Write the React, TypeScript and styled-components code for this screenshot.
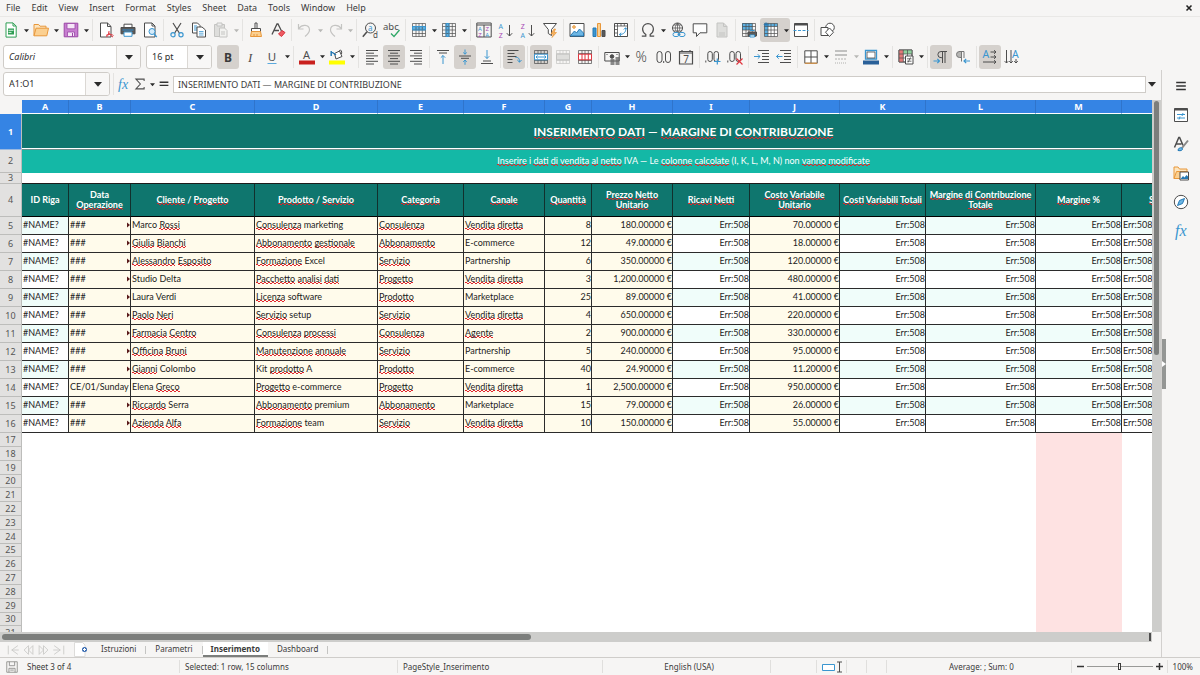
import React, { Fragment } from "react";
import styled, { createGlobalStyle, css } from "styled-components";

const UI = '"Noto Sans", sans-serif';
const CELL = 'Lato, "Liberation Sans", sans-serif';
const INK = "#4d4d4d";
const BLUE = "#3a96d0";
const FADE = "#c4c4c2";

const GlobalStyle = createGlobalStyle`
  *, *::before, *::after { box-sizing: border-box; }
  body { margin: 0; background: #f6f5f4; color: #3a3a3a; font: 9px/12px ${UI}; }
  button, input { font: inherit; color: inherit; }
  button { border: 0; padding: 0; background: none; }
`;

const App = styled.div`
  display: flex;
  flex-direction: column;
  height: 100vh;
  overflow: hidden;
`;

const MenuBar = styled.nav`
  display: flex;
  align-items: center;
  height: 17px;
  padding: 0 6px;
  border-bottom: 1px solid #e9e8e6;
`;

const MenuItem = styled.button`
  margin-right: 11px;
`;

const CloseButton = styled.button`
  display: flex;
  margin-left: auto;
`;

const Toolbar = styled.div<{ $inset?: boolean }>`
  display: flex;
  align-items: center;
  height: ${(p) => (p.$inset ? 27 : 26)}px;
  padding-left: ${(p) => (p.$inset ? 3 : 0)}px;
`;

const ToolButton = styled.button<{ $on?: boolean; $joined?: boolean; $narrow?: boolean }>`
  display: flex;
  align-items: center;
  justify-content: center;
  flex: none;
  width: ${(p) => (p.$narrow ? 16 : 22)}px;
  height: 24px;
  border-radius: ${(p) => (p.$joined ? "3px 0 0 3px" : "3px")};
  background: ${(p) => (p.$on ? "#d5d1cd" : "transparent")};
`;

const ArrowButton = styled.button<{ $on?: boolean; $faded?: boolean }>`
  display: flex;
  align-items: center;
  justify-content: center;
  flex: none;
  width: 8px;
  height: 24px;
  border-radius: 0 3px 3px 0;
  color: ${(p) => (p.$faded ? "#b8b8b6" : "#2b2b2b")};
  background: ${(p) => (p.$on ? "#d5d1cd" : "transparent")};
`;

const Separator = styled.span`
  flex: none;
  width: 1px;
  height: 22px;
  margin: 0 2px;
  background: #e4e3e1;
`;

const Combo = styled.div<{ $width: number; $tight?: boolean }>`
  display: flex;
  flex: none;
  width: ${(p) => p.$width}px;
  height: 24px;
  margin-right: ${(p) => (p.$tight ? 1 : 5)}px;
  border: 1px solid #cfccc8;
  border-radius: 3px;
  overflow: hidden;
  background: #fff;
`;

const ComboInput = styled.input<{ $italic?: boolean }>`
  flex: 1;
  min-width: 0;
  padding: 0 5px;
  border: 0;
  outline: 0;
  background: none;
  color: #2e2e2e;
  font-style: ${(p) => (p.$italic ? "italic" : "normal")};
`;

const ComboArrow = styled.button`
  display: flex;
  align-items: center;
  justify-content: center;
  width: 24px;
  border-left: 1px solid #dbd8d4;
  background: #f8f7f6;
  color: #2b2b2b;
`;

const Main = styled.main`
  display: flex;
  flex: 1;
  min-height: 0;
`;

const Workspace = styled.section`
  display: flex;
  flex-direction: column;
  flex: 1;
  min-width: 0;
`;

const FormulaBar = styled.div`
  display: flex;
  align-items: center;
  height: 30px;
  padding: 0 5px 2px 3px;
`;

const FormulaInput = styled.input`
  flex: 1;
  min-width: 0;
  height: 17px;
  margin: 0 2px 0 1px;
  padding: 0 4px;
  border: 1px solid #cfccc8;
  outline: 0;
  background: #fff;
`;

const SheetArea = styled.div`
  display: flex;
  flex: 1;
  min-height: 0;
`;

const Viewport = styled.div`
  display: flex;
  flex-direction: column;
  flex: 1;
  min-width: 0;
  overflow: hidden;
  background: #fff;
`;

const Sheet = styled.table`
  flex: none;
  width: 1345px;
  table-layout: fixed;
  border-collapse: separate;
  border-spacing: 0;
  font: 9px/12px ${CELL};
  color: #1c1c1c;
`;

const SheetRow = styled.tr<{ $height: number }>`
  height: ${(p) => p.$height}px;
`;

const Corner = styled.td`
  padding: 0;
  background: #f6f5f4;
`;

const ColumnHead = styled.th`
  padding: 0;
  border-right: 1px solid #2f74cb;
  border-bottom: 1px solid #fff;
  background: #3584e4;
  color: #fff;
  font: bold 9px/12px ${UI};
`;

const RowHead = styled.th<{ $on?: boolean }>`
  padding: 0;
  border-right: 1px solid #bdbdbb;
  border-bottom: 1px solid ${(p) => (p.$on ? "#9bb9e0" : "#bdbdbb")};
  background: ${(p) => (p.$on ? "#3584e4" : "#e2e1e0")};
  color: ${(p) => (p.$on ? "#fff" : "#555")};
  font: ${(p) => (p.$on ? "bold" : "normal")} 9px/8px ${UI};
`;

const TitleCell = styled.td`
  padding: 0;
  border-bottom: 1px solid #6d8f8c;
  background: #0f766e;
  box-shadow: inset 0 -1px #fff;
  color: #fff;
  text-align: center;
  font: bold 12px/16px ${CELL};
`;

const NoteCell = styled.td`
  padding: 0 0 2px;
  background: #14b8a6;
  color: #fff;
  text-align: center;
`;

const SpacerCell = styled.td`
  padding: 0;
  border-bottom: 1px solid #1c1c1c;
`;

const FieldHead = styled.th`
  padding: 0;
  border-right: 1px solid #12302d;
  border-bottom: 1px solid #000;
  background: #0f766e;
  color: #fff;
  font: bold 9px/10px ${CELL};
`;

const fills = { input: "#fffbeb", mint: "#f0fdfa", plain: "#fff" };

const Cell = styled.td<{ $fill: keyof typeof fills; $right?: boolean }>`
  padding: 0 0 2px ${(p) => (p.$right ? 0 : 1)}px;
  border-right: 1px solid #2b2b2b;
  border-bottom: 1px solid #2b2b2b;
  background: ${(p) => fills[p.$fill]};
  text-align: ${(p) => (p.$right ? "right" : "left")};
  white-space: nowrap;
  overflow: hidden;
`;

const Clipped = styled.span`
  display: flex;
  align-items: center;
  justify-content: space-between;
`;

const EmptyCell = styled.td<{ $alert?: boolean }>`
  padding: 0;
  background: ${(p) => (p.$alert ? "#fee2e2" : "#fff")};
`;

/* A two-pixel-high zigzag under the word, drawn as two offset dashed rows. */
const Misspelled = styled.span`
  background:
    repeating-linear-gradient(90deg, #e0262c 0 2px, transparent 2px 4px) 0 calc(100% - 1px) / 100% 1px no-repeat,
    repeating-linear-gradient(90deg, transparent 0 2px, #e0262c 2px 4px) 0 100% / 100% 1px no-repeat;
`;

const track = css`
  flex: none;
  background: #cdcdcb;
`;

const VerticalScroll = styled.div`
  ${track}
  width: 9px;
  padding: 1px 2px;
`;

const VerticalThumb = styled.div`
  height: 48%;
  border-radius: 3px;
  background: #7c7e7c;
`;

const HorizontalScroll = styled.div`
  ${track}
  display: flex;
  align-items: center;
  justify-content: space-between;
  height: 10px;
  margin-right: 9px;
  padding: 0 1px 0 2px;
`;

const HorizontalThumb = styled.div`
  width: 46%;
  height: 6px;
  border-radius: 3px;
  background: #7c7e7c;
`;

const SplitGrip = styled.div`
  width: 2px;
  height: 8px;
  background: #4d4d4d;
`;

const TabBar = styled.div`
  display: flex;
  align-items: center;
  height: 15px;
  padding-left: 6px;
  font-size: 8px;
`;

const TabNav = styled.button`
  display: flex;
`;

const AddTab = styled.button`
  display: flex;
  margin: 0 4px 0 8px;
`;

const Tab = styled.button<{ $on?: boolean }>`
  height: 15px;
  padding: 0 ${(p) => (p.$on ? 8 : 9)}px;
  border-bottom: 2px solid ${(p) => (p.$on ? "#7c7e7c" : "transparent")};
  background: ${(p) => (p.$on ? "#fff" : "transparent")};
  font-weight: ${(p) => (p.$on ? "bold" : "normal")};
`;

const TabRule = styled.span`
  width: 1px;
  height: 8px;
  background: #c4c4c2;
`;

const DeckHandle = styled.button`
  display: flex;
  align-items: center;
  justify-content: center;
  align-self: center;
  width: 5px;
  height: 50px;
  background: #949694;
`;

const Sidebar = styled.aside`
  display: flex;
  flex: none;
  width: 39px;
  border-left: 1px solid #d2d0ce;
`;

const Deck = styled.div`
  display: flex;
  flex-direction: column;
  align-items: center;
  flex: 1;
  padding: 1px 5px 0 0;
`;

const DeckButton = styled.button`
  display: flex;
  align-items: center;
  justify-content: center;
  width: 29px;
  height: 29px;
`;

const StatusBar = styled.footer`
  display: flex;
  align-items: center;
  height: 18px;
  padding: 0 7px 0 5px;
  border-top: 1px solid #cfcdca;
  font-size: 8px;
`;

const Status = styled.div<{ $grow?: number; $width?: number; $center?: boolean }>`
  display: flex;
  align-items: center;
  justify-content: ${(p) => (p.$center ? "center" : "flex-start")};
  flex: ${(p) => (p.$grow ? `${p.$grow} 1 0` : "none")};
  width: ${(p) => (p.$width ? `${p.$width}px` : "auto")};
  height: 13px;
  padding-left: 5px;
  border-left: 1px solid #e0dfdd;
  white-space: nowrap;
`;

const DocState = styled.div`
  display: flex;
  align-items: center;
  flex: none;
  gap: 8px;
  width: 174px;
`;

const ZoomGroup = styled.div`
  display: flex;
  align-items: center;
  flex: none;
  gap: 3px;
  width: 96px;
  height: 13px;
  padding-left: 5px;
  border-left: 1px solid #e0dfdd;
`;

const ZoomSlider = styled.input`
  appearance: none;
  width: 66px;
  height: 9px;
  margin: 0;
  background: linear-gradient(#9a9a98, #9a9a98) center / 100% 1px no-repeat;
  &::-webkit-slider-thumb {
    appearance: none;
    width: 3px;
    height: 7px;
    border: 1px solid #3a3a3a;
    background: #f6f5f4;
  }
`;

const Glyph = styled.svg`
  flex: none;
  overflow: visible;
`;

const Caret = ({ size = 6 }: { size?: number }) => (
  <svg width={size} height={size} viewBox="0 0 6 6" aria-hidden="true">
    <path d="M0 1.5h6L3 5z" fill="currentColor" />
  </svg>
);

const letter = (x: number, y: number, size: number, fill: string, s: string, extra: object = {}) => (
  <text x={x} y={y} fontSize={size} fill={fill} stroke="none" fontFamily="Noto Sans" {...extra}>{s}</text>
);

const sheetGrid = (
  <path d="M1.5 1.5h13v13h-13zM1.5 4.5h13M1.5 8h13M1.5 11.5h13M5 1.5v13M8 1.5v13M11.3 1.5v13" strokeWidth=".7" />
);

const pilcrow = (x: number) => (
  <path d={`M${x} 2.5h6M${x} 2.5a3 3 0 0 0 0 6.2h1M${x + 1.5} 2.5v11.5M${x + 4} 2.5v11.5`} strokeWidth="1" />
);

const icons: Record<string, React.ReactNode> = {
  new: <><path d="M3 .9h7l3.2 3.2v11H3z" fill="#fff" stroke="#2f9e54" /><path d="M10 1v3h3" stroke="#2f9e54" /><path d="M5 6.5h6v6H5z" fill="#2f9e54" stroke="none" /><path d="M5.5 8.3h5M5.5 10.4h3" stroke="#d8f2df" /></>,
  open: <><path d="M1 13.8V2.5h4.6l1.4 1.7h6v2" fill="#fce5bf" stroke="#e8973a" /><path d="M1 13.8 3 6.2h12.5L13.8 13.8z" fill="#fbd091" stroke="#e8973a" /></>,
  save: <><path d="M1.2 1.2h13.6v13.6H1.2z" fill="#c77ed0" stroke="#9b47a6" /><path d="M4 1.5h8v5.3H4zM4.5 10h7v4.5h-7z" fill="#f6e7f8" stroke="#9b47a6" strokeWidth=".8" /><path d="M9.5 11v3.5" stroke="#9b47a6" /></>,
  pdf: <><path d="M2.5 1h7L13 4.4V15H2.5z" fill="#fff" /><path d="M9.5 1v3.5H13" /><path d="M8.500 15c2-2 2.500-3.500 2.500-6M8 13.500c3-2 5-1.500 7.500 0M10.500 10.500c1 2 2.500 3.500 4.500 4.500" stroke="#e0353f" /></>,
  print: <><path d="M4 5.500V2.200h8v3.300" fill="#fff" /><path d="M1 5.500h14v6.300H1z" fill="#5a5a5a" /><path d="M2.500 8h11" stroke="#2b8ad0" /><path d="M4 10h8v4.300H4z" fill="#fff" stroke="#3a96d0" /></>,
  preview: <><path d="M2.500 1h7.500L13 4v11H2.500z" fill="#fff" /><path d="M10 1v3h3" /><circle cx="10" cy="9.500" r="3" fill="#d5ebfa" stroke={BLUE} /><path d="m12 12 2.800 3" stroke={BLUE} strokeWidth="1.300" /></>,
  cut: <><path d="M4 1l6.300 10M12 1 5.700 11" strokeWidth="1.200" /><circle cx="4" cy="12.700" r="2.100" stroke={BLUE} strokeWidth="1.200" /><circle cx="12" cy="12.700" r="2.100" stroke={BLUE} strokeWidth="1.200" /></>,
  copy: <><path d="M1.500 1h5l2.500 2.500V11H1.500z" fill="#fff" /><path d="M3 4h3M3 6h3M3 8h3" stroke={BLUE} /><path d="M6 5h5l3.500 3v7H6z" fill="#fff" /><path d="M8 9.500h4.500M8 11.200h4.500M8 13h4.500" stroke={BLUE} strokeWidth=".8" /></>,
  paste: <g stroke={FADE}><path d="M1.500 2.500h10v12h-10z" fill="#dededc" /><path d="M4 1h5v3H4z" fill="#eee" /><path d="M6.500 6h5L14 8.500V15H6.500z" fill="#f2f2f0" /><path d="M8 10h4M8 12h4" /></g>,
  brush: <><path d="M7 1h2v5.500H7z" fill="#fff" /><path d="M3.500 6.500h9v3h-9z" fill="#fff" /><path d="M3.500 9.500h9l1 5H2.500z" fill="#fbd091" stroke="#e8973a" /><path d="M6 12v2.500M9 12v2.500" stroke="#e8973a" /></>,
  clear: <><path d="M2 12.500 7 2h1l3.500 7M4 8.500h5" strokeWidth="1.300" /><path d="m8.500 12 3.500-3.500 3 2-3.500 4z" fill="#ee5b62" stroke="#d8333d" /></>,
  undo: <path d="M1.500 2v5h5M1.800 6.500C5 2 12 2.500 12.500 7.500c.3 3-2 5-4.500 7" stroke={FADE} strokeWidth="1.200" />,
  redo: <path d="M14.500 2v5h-5M14.200 6.500C11 2 4 2.500 3.500 7.500c-.3 3 2 5 4.500 7" stroke={FADE} strokeWidth="1.200" />,
  find: <><circle cx="8.500" cy="6" r="5" /><path d="M5 9.800 .8 14.800" strokeWidth="1.500" />{letter(6, 8.500, 8, BLUE, "a")}{letter(11, 15.500, 8, INK, "d")}</>,
  spell: <>{letter(-1, 7.500, 9.500, INK, "abc")}<path d="m7 11.500 3 3L15.500 8" stroke="#2fa866" strokeWidth="1.300" /></>,
  row: <><path d="M1.500 4.500h13V8h-13z" fill="#5cb0e2" stroke="none" />{sheetGrid}<path d="M1.500 4.500h13V8h-13z" stroke={BLUE} /></>,
  col: <><path d="M5 1.500h3v13H5z" fill="#5cb0e2" stroke="none" />{sheetGrid}<path d="M5 1.500h3v13H5z" stroke={BLUE} /></>,
  sort: <><path d="M.8 1h14.400v14H.8zM.8 3h14.400M8 3v12" />{letter(2, 8.500, 6, BLUE, "A")}{letter(2.200, 14.500, 6, "#a648b5", "Z")}{letter(9.500, 8.500, 6, "#a648b5", "Z")}{letter(9.300, 14.500, 6, BLUE, "A")}</>,
  az: <>{letter(.5, 6.500, 7, BLUE, "A")}{letter(.7, 15.500, 7, "#a648b5", "Z")}<path d="M11.500 3v11M8.800 11.200l2.700 2.800 2.700-2.800" /></>,
  za: <>{letter(.7, 6.500, 7, "#a648b5", "Z")}{letter(.5, 15.500, 7, BLUE, "A")}<path d="M11.500 3v11M8.800 11.200l2.700 2.800 2.700-2.800" /></>,
  filter: <><path d="M1.500 1.500h13L9.500 7.500v6L6.300 11.500v-4z" fill="#fff" /><path d="m12 7-3 5h2.500L10 15.500l4.500-5H12L13.500 7z" fill="#f6b565" stroke="#e8973a" strokeWidth=".7" /></>,
  image: <><path d="M1 1.500h14v13H1z" fill="#fff" /><circle cx="5" cy="5" r="1.300" fill="#fbd091" stroke="#e8973a" /><path d="m1.500 13.500 4-4.500 2 2L10.500 7l4 4v3h-13z" fill="#6db6e4" stroke="#2579b5" /></>,
  chart: <><path d="M2 6h3v8.500H2z" fill="#3a96d0" stroke="#2579b5" /><path d="M6.500 1.500h3v13h-3z" fill="#fbd091" stroke="#e8973a" /><path d="M11 8.500h3v6h-3z" fill="#5a5a5a" /></>,
  pivot: <><path d="M1.500 1.500h13v13h-13z" fill="#fff" /><path d="M1.500 4h13M4.500 1.500v13M8 1.500V4M11.300 1.500V4M1.500 7.500h3M1.500 11h3" strokeWidth=".8" /><path d="M12.500 6c1 4-2 6.500-6 6.500M10.800 7.500l1.800-1.800L14 7.500M8.200 10.800 6.300 12.500 8 14" stroke={BLUE} /></>,
  omega: <path d="M1.800 14.200h4v-1.800C3.500 11 2.600 9 2.600 7a5.400 5.400 0 0 1 10.800 0c0 2-.9 4-3.200 5.400v1.800h4" strokeWidth="1.200" />,
  link: <><circle cx="7.500" cy="6" r="5" /><path d="M2.500 6h10M3.500 3h8M3.500 9h8M7.500 1v10M7.500 1c-3 3-3 7 0 10M7.500 1c3 3 3 7 0 10" strokeWidth=".7" /><rect x="3" y="10.500" width="6" height="4" rx="2" fill="#f6f5f4" stroke={BLUE} /><rect x="9" y="10.500" width="6" height="4" rx="2" fill="#f6f5f4" stroke={BLUE} /><path d="M7.500 12.500h3" stroke={BLUE} /></>,
  comment: <path d="M1.200 1.800h13.600v9H8L4.500 14.500v-3.700H1.200z" fill="#fdfdfd" />,
  doc: <g stroke={FADE}><path d="M3 1h6.500L13 4.500V15H3z" fill="#dededc" /><path d="M9.500 1v3.500H13M5 11h6M5 13h6" /></g>,
  printarea: <><path d="M1 1h10.500v7H1z" fill="#5cb0e2" stroke="none" />{sheetGrid}<path d="M7 10h8.500v4H7z" fill="#5a5a5a" /><path d="M9 8.500h4.500M9 13h4.500v2H9z" fill="#fff" stroke={BLUE} /></>,
  freeze: <><path d="M1.500 1.500h13v13h-13z" fill="#fff" stroke="none" /><path d="M1.500 1.500h13v3h-13zM1.500 4.500H5v10H1.500z" fill="#5cb0e2" stroke="none" />{sheetGrid}<path d="M3 .2v4.600M.7 2.500h4.600M1.300.8l3.400 3.400M4.700.8 1.300 4.200" stroke="#2579b5" strokeWidth=".8" /></>,
  split: <><path d="M1.500 1.500h13v13h-13z" fill="#fff" /><path d="M1.500 2.500h13" strokeWidth="2" /><path d="M.5 8.500h15" stroke={BLUE} strokeDasharray="3 1.500" /></>,
  shapes: <><circle cx="10" cy="5.500" r="4.300" fill="#fff" /><path d="M1 5.500h7v8H1z" fill="#fff" /><path d="m9.500 6 4 4.200-4 4.300-4-4.300z" fill="#fff" /></>,
  bold: letter(4, 12.500, 12, "#3a3a3a", "B", { fontWeight: 700 }),
  italic: letter(6, 12.500, 13, INK, "I", { fontStyle: "italic", fontFamily: "Liberation Serif" }),
  underline: <>{letter(3.800, 11.500, 11.500, INK, "U")}<path d="M3.500 14.500h9" stroke="#5aa9dd" /></>,
  fontcolor: <>{letter(4, 9.800, 11, INK, "A")}<path d="M0 11.500h16v4H0z" fill="#c9211e" stroke="none" /></>,
  highlight: <><path d="m5.500 4.500 5-2.500 2.500 5.500L7 10z" fill="#fff" /><path d="M2 2.500 7 6M2.200 2v5" stroke="#2579b5" strokeWidth="1.500" /><path d="M10.500 2c0-2 3-1 2 3" /><path d="M0 11.500h16v4H0z" fill="#ffff00" stroke="none" /></>,
  left: <path d="M2 1.500h12M2 4.200h8M2 6.900h12M2 9.600h8M2 12.300h12M2 15h8" />,
  center: <path d="M2 1.500h12M4 4.200h8M2 6.900h12M4 9.600h8M2 12.300h12M4 15h8" />,
  right: <path d="M2 1.500h12M6 4.200h8M2 6.900h12M6 9.600h8M2 12.300h12M6 15h8" />,
  top: <><path d="M2 1.500h12M4 4h8" /><path d="M8 15V6.500M5.800 8.700 8 6.500l2.200 2.200" stroke={BLUE} /></>,
  middle: <><path d="M2 7h12M4 9.300h8" /><path d="M8 .5v4.700M6.200 3.500 8 5.200l1.800-1.700M8 15.800v-4.700M6.200 12.800 8 11.100l1.800 1.700" stroke={BLUE} /></>,
  bottom: <><path d="M4 12h8M2 14.500h12" /><path d="M8 1v8.500M5.800 7.300 8 9.500l2.200-2.200" stroke={BLUE} /></>,
  wrap: <><path d="M1.500 1.500h11M1.500 4.500h7M1.500 7.500h9M1.500 10.500h5M1.500 13.500h5" /><path d="M9.500 8.500c3-.5 4 1 4 4.500M11.300 11l2.200 2.200 2-2.200" stroke={BLUE} /></>,
  merge: <>{sheetGrid}<path d="M1.500 5.200h13v5.600h-13z" fill="#fff" stroke={BLUE} /><path d="M3 8h10M4.500 6.500 3 8l1.500 1.500M11.500 6.500 13 8l-1.500 1.500" stroke={BLUE} /></>,
  mergecells: <g stroke={FADE}>{sheetGrid}<path d="M1.500 5.200h13v5.600h-13z" fill="#dededc" /></g>,
  unmerge: <>{sheetGrid}<path d="M1.500 5.200h13v5.600h-13zM5 5.200v5.600M8 5.200v5.600M11.300 5.200v5.600" fill="#fff" stroke="#e0353f" /></>,
  currency: <><path d="M.8 3.500h14.400v8.500H.8z" /><circle cx="8" cy="7.500" r="1.800" fill={INK} /><path d="M2.500 5.500h1M12.500 5.500h1" /><path d="M6.500 11h4M6.500 13h4M6.500 15h4M11.500 9h4M11.500 11h4M11.500 13h4M11.500 15h4" stroke="#666" strokeWidth="1.300" /></>,
  percent: letter(1.500, 13, 14, INK, "%", { fontWeight: 300 }),
  decimal: <><rect x="1" y="2.500" width="5" height="11" rx="2.500" /><rect x="9.500" y="2.500" width="5" height="11" rx="2.500" /><path d="M7.700 12v2" /></>,
  date: <><path d="M1.500 2.500h13v12.500h-13zM1.500 4h13M4 1v2M12 1v2" strokeWidth="1.200" />{letter(5.200, 13.500, 10, INK, "7")}</>,
  adddec: <><path d="M.8 11.500v2" /><rect x="2.800" y="2.500" width="4.500" height="10" rx="2.200" /><rect x="9" y="2.500" width="4.500" height="10" rx="2.200" /><path d="M9 12.500h6.500M12.300 9.500v6" stroke={BLUE} strokeWidth="1.200" /></>,
  deldec: <><path d="M.8 11.500v2" /><rect x="2.800" y="2.500" width="4.500" height="10" rx="2.200" /><rect x="9" y="2.500" width="4.500" height="10" rx="2.200" /><path d="m9.500 9.500 6 6M15.500 9.500l-6 6" stroke="#e0353f" strokeWidth="1.200" /></>,
  indent: <><path d="M4 1.500h11M8 4.500h7M8 7.500h7M8 10.500h7M4 13.500h11" /><path d="M0 7.500h6M3.800 5.300 6 7.500 3.800 9.700" stroke={BLUE} /></>,
  outdent: <><path d="M4 1.500h11M8 4.500h7M8 7.500h7M8 10.500h7M4 13.500h11" /><path d="M.5 7.500h6M2.700 5.300.5 7.500l2.200 2.200" stroke={BLUE} /></>,
  borders: <><path d="M1.800 1.800h12.400v12.400H1.800z" fill="#fff" /><path d="M8 1.800v12.400M1.800 8h12.400" /><path d="M1.800 14.200h12.400" stroke="#e8973a" /></>,
  linestyle: <g stroke="#b0b0ae"><path d="M2 2h12M2 6h12" strokeWidth="1.600" /><path d="M2 10h12" strokeDasharray="2 1" /><path d="M2 14h12" strokeDasharray="1 1" /></g>,
  linecolor: <><path d="M2.500 1.500h11v8.500h-11z" fill="#fff" strokeWidth="1.300" stroke={BLUE} /><path d="M4 3h8v6H4z" strokeWidth=".8" /><path d="M0 11.500h16v4H0z" fill="#2a6099" stroke="none" /></>,
  conditional: <><path d="M1 1h13v12H1z" fill="#fff" /><path d="M1 1h4.300v12H1z" fill="#e37a7a" stroke="none" /><path d="M5.300 1H14v4H5.300z" fill="#8fd19e" stroke="none" /><path d="M1 1h13v12H1zM1 5h13M1 9h13M5.300 1v12M9.500 1v12" strokeWidth=".7" /><path d="M7.500 7h7.500v8H7.500z" fill="#fff" /><path d="M9 9.800h4.500M9 12.200h4.500M12.500 8.500l-2.500 5" strokeWidth=".8" /></>,
  ltr: <>{pilcrow(8)}<path d="M.5 12h6M4.300 9.800 6.500 12l-2.200 2.200" stroke={BLUE} strokeWidth="1.200" /></>,
  rtl: <><path d="M4.500 2.500h2v6h-2a3 3 0 0 1 0-6z" fill="#b5b5b3" stroke="#777" /><path d="M4 2.500h5M6.500 2.500v10M9 2.500V9" stroke="#777" /><path d="M9 12h6M11.200 9.800 9 12l2.200 2.200" stroke={BLUE} strokeWidth="1.200" /></>,
  texth: <>{letter(.5, 9, 10.500, BLUE, "A")}<path d="M8.500 3h5.500M8.500 8h5.500M1 13h13M12 1.200 14 3l-2 1.800M12 6.200 14 8l-2 1.800M12 11.200 14 13l-2 1.800" /></>,
  textv: <><path d="M2.500 1v13M7 1v13M12 10v4M.7 12.200 2.500 14l1.800-1.800M5.200 12.200 7 14l1.800-1.800M10.200 12.200 12 14l1.800-1.800" />{letter(8, 9, 10.500, BLUE, "A")}</>,
  fx: letter(2, 12.500, 14, BLUE, "fx", { fontStyle: "italic", fontFamily: "Liberation Serif" }),
  sigma: <path d="M13.500 4V1.500H2.500L8.500 8l-6 6.500h11V12" strokeWidth="1.400" />,
  equals: <path d="M3 6h10M3 9.500h10" strokeWidth="1.500" stroke="#333" />,
  close: <path d="m4 4 8 8M12 4l-8 8" stroke="#222" strokeWidth="2.500" />,
  hamburger: <path d="M2.500 4h11M2.500 8h11M2.500 12h11" stroke="#333" strokeWidth="1.500" />,
  properties: <><path d="M1.500 1.500h13v13h-13z" fill="#fff" /><path d="M1.500 2.500h13" strokeWidth="2" /><path d="M4 7.500h8M4 11h8M10 6l-1 3M7 9.500l-1 3" stroke={BLUE} /></>,
  styles: <><path d="M1.500 11.500 5.800 1.500h.8l3.500 8M3 8h5.500" strokeWidth="1.500" /><path d="M15 4.500 9 12" strokeWidth="2" stroke="#888" /><path d="M5 14.500c0-2 2-3.500 4-2.500 1.500 1 0 3.500-4 2.500z" fill="#6db6e4" stroke="#2579b5" /></>,
  gallery: <><path d="M1 13.500V2h4l1.500 2H14v3" fill="#fce5bf" stroke="#e8973a" /><path d="M1 13.500 3.500 6.500h11v7z" fill="#fbd091" stroke="#e8973a" /><path d="M7 7h8.500v8H7z" fill="#fff" /><path d="m7.500 14 2.500-3 1.500 1.500L13.500 10l1.500 1.500V14z" fill="#2579b5" stroke="none" /></>,
  navigator: <><circle cx="8" cy="8" r="6.700" fill="#fff" /><path d="m11.500 4.500-2 5-5 2 2-5z" fill="#6db6e4" stroke="#2579b5" /></>,
  functions: letter(2, 12.500, 16, BLUE, "fx", { fontStyle: "italic", fontFamily: "Liberation Serif" }),
  docstate: <path d="M2 2h12v12H2zM5 2v4.500h6V2M4.500 14V9.500h7V14M6 11.500h4" stroke="#8e8e8c" />,
};

const Icon = ({ name, size = 16 }: { name: string; size?: number }) => (
  <Glyph width={size} height={size} viewBox="0 0 16 16" fill="none" stroke={INK} strokeWidth="1" aria-hidden="true">
    {icons[name]}
  </Glyph>
);

type Tool = { name: string; label: string; menu?: boolean; on?: boolean; faded?: boolean };
const t = (name: string, label: string, flags = ""): Tool => ({
  name,
  label,
  menu: flags.includes("m"),
  on: flags.includes("o"),
  faded: flags.includes("f"),
});

const standardTools: Tool[][] = [
  [t("new", "New", "m"), t("open", "Open", "m"), t("save", "Save", "m")],
  [t("pdf", "Export as PDF"), t("print", "Print"), t("preview", "Print preview")],
  [t("cut", "Cut"), t("copy", "Copy"), t("paste", "Paste", "mf")],
  [t("brush", "Clone formatting"), t("clear", "Clear formatting")],
  [t("undo", "Undo", "mf"), t("redo", "Redo", "mf")],
  [t("find", "Find and replace"), t("spell", "Spelling")],
  [t("row", "Row", "m"), t("col", "Column", "m")],
  [t("sort", "Sort"), t("az", "Sort ascending"), t("za", "Sort descending"), t("filter", "AutoFilter")],
  [t("image", "Image"), t("chart", "Chart"), t("pivot", "Pivot table")],
  [t("omega", "Special character", "m"), t("link", "Hyperlink"), t("comment", "Comment"), t("doc", "Headers and footers")],
  [t("printarea", "Print area"), t("freeze", "Freeze rows and columns", "mo"), t("split", "Split window")],
  [t("shapes", "Draw functions")],
];

const formatTools: Tool[][] = [
  [t("bold", "Bold", "o"), t("italic", "Italic"), t("underline", "Underline", "m")],
  [t("fontcolor", "Font color", "m"), t("highlight", "Background color", "m")],
  [t("left", "Align left"), t("center", "Center", "o"), t("right", "Align right")],
  [t("top", "Align top"), t("middle", "Center vertically", "o"), t("bottom", "Align bottom")],
  [t("wrap", "Wrap text", "o")],
  [t("merge", "Merge and center", "o"), t("mergecells", "Merge cells"), t("unmerge", "Unmerge cells")],
  [t("currency", "Currency", "m"), t("percent", "Percent"), t("decimal", "Number"), t("date", "Date")],
  [t("adddec", "Add decimal place"), t("deldec", "Delete decimal place")],
  [t("indent", "Increase indent"), t("outdent", "Decrease indent")],
  [t("borders", "Borders", "m"), t("linestyle", "Border style", "mf"), t("linecolor", "Border color", "m")],
  [t("conditional", "Conditional formatting", "m")],
  [t("ltr", "Left to right", "o"), t("rtl", "Right to left")],
  [t("texth", "Horizontal text", "o"), t("textv", "Vertical text")],
];

const ToolGroups = ({ groups }: { groups: Tool[][] }) => (
  <>
    {groups.map((group, i) => (
      <Fragment key={i}>
        {i > 0 && <Separator />}
        {group.map((tool) => (
          <Fragment key={tool.name}>
            <ToolButton $on={tool.on} $joined={tool.menu} aria-label={tool.label}>
              <Icon name={tool.name} />
            </ToolButton>
            {tool.menu && (
              <ArrowButton $on={tool.on} $faded={tool.faded} aria-label={`${tool.label} options`}>
                <Caret size={5} />
              </ArrowButton>
            )}
          </Fragment>
        ))}
      </Fragment>
    ))}
  </>
);

type ComboProps = { label: string; value: string; width: number; italic?: boolean; tight?: boolean };

const ComboBox = ({ label, value, width, italic, tight }: ComboProps) => (
  <Combo $width={width} $tight={tight}>
    <ComboInput aria-label={label} defaultValue={value} $italic={italic} />
    <ComboArrow aria-label={`${label} list`}><Caret size={8} /></ComboArrow>
  </Combo>
);

/* Words that start with a tilde are flagged by the spell checker. */
const Spelled = ({ text }: { text: string }) => (
  <>
    {text.split(" ").map((word, i) => (
      <Fragment key={i}>
        {i > 0 && " "}
        {word.startsWith("~") ? <Misspelled>{word.slice(1)}</Misspelled> : word}
      </Fragment>
    ))}
  </>
);

const columns: [string, number][] = [
  ["A", 47], ["B", 62], ["C", 124], ["D", 123], ["E", 86], ["F", 81], ["G", 47], ["H", 81],
  ["I", 77], ["J", 90], ["K", 86], ["L", 110], ["M", 86], ["N", 76], ["O", 147],
];

const fields = [
  "ID Riga", "Data ~Operazione", "~Cliente / ~Progetto", "~Prodotto / ~Servizio", "~Categoria", "~Canale",
  "~Quantità", "~Prezzo ~Netto ~Unitario", "~Ricavi ~Netti", "~Costo ~Variabile ~Unitario",
  "~Costi ~Variabili ~Totali", "~Margine ~di ~Contribuzione ~Totale", "~Margine %", "~Stato", "Note",
];

const records: string[][] = [
  ["###", "Marco ~Rossi", "~Consulenza marketing", "~Consulenza", "~Vendita ~diretta", "8", "180.00000 €", "70.00000 €"],
  ["###", "~Giulia ~Bianchi", "~Abbonamento ~gestionale", "~Abbonamento", "E-commerce", "12", "49.00000 €", "18.00000 €"],
  ["###", "~Alessandro ~Esposito", "~Formazione Excel", "~Servizio", "Partnership", "6", "350.00000 €", "120.00000 €"],
  ["###", "Studio Delta", "~Pacchetto ~analisi ~dati", "~Progetto", "~Vendita ~diretta", "3", "1,200.00000 €", "480.00000 €"],
  ["###", "Laura Verdi", "~Licenza software", "~Prodotto", "Marketplace", "25", "89.00000 €", "41.00000 €"],
  ["###", "~Paolo ~Neri", "~Servizio setup", "~Servizio", "~Vendita ~diretta", "4", "650.00000 €", "220.00000 €"],
  ["###", "~Farmacia ~Centro", "~Consulenza ~processi", "~Consulenza", "~Agente", "2", "900.00000 €", "330.00000 €"],
  ["###", "~Officina ~Bruni", "~Manutenzione ~annuale", "~Servizio", "Partnership", "5", "240.00000 €", "95.00000 €"],
  ["###", "~Gianni Colombo", "Kit ~prodotto A", "~Prodotto", "E-commerce", "40", "24.90000 €", "11.20000 €"],
  ["CE/01/Sunday", "Elena ~Greco", "~Progetto e-commerce", "~Progetto", "~Vendita ~diretta", "1", "2,500.00000 €", "950.00000 €"],
  ["###", "~Riccardo Serra", "~Abbonamento premium", "~Abbonamento", "Marketplace", "15", "79.00000 €", "26.00000 €"],
  ["###", "~Azienda ~Alfa", "~Formazione team", "~Servizio", "~Vendita ~diretta", "10", "150.00000 €", "55.00000 €"],
];

const emptyRows = Array.from({ length: 15 }, (_, i) => 17 + i);

const RecordRow = ({ record, index }: { record: string[]; index: number }) => {
  const [date, client, product, category, channel, quantity, price, cost] = record;
  const band = index % 2 ? "plain" : "mint";
  return (
    <SheetRow $height={18}>
      <RowHead scope="row">{index + 5}</RowHead>
      <Cell $fill={band}>#NAME?</Cell>
      <Cell $fill="input">
        <Clipped>
          {date}
          {date === "###" && (
            <svg width="3" height="6" viewBox="0 0 3 6" aria-hidden="true"><path d="M0 .5 3 3 0 5.500z" fill="#5a1a1a" /></svg>
          )}
        </Clipped>
      </Cell>
      {[client, product, category, channel].map((value, i) => (
        <Cell key={i} $fill="input"><Spelled text={value} /></Cell>
      ))}
      <Cell $fill="input" $right>{quantity}</Cell>
      <Cell $fill="input" $right>{price}</Cell>
      <Cell $fill={band} $right>Err:508</Cell>
      <Cell $fill="input" $right>{cost}</Cell>
      <Cell $fill={band} $right>Err:508</Cell>
      <Cell $fill={band} $right>Err:508</Cell>
      <Cell $fill={band} $right>Err:508</Cell>
      <Cell $fill={band}>Err:508</Cell>
      <Cell $fill="input" />
    </SheetRow>
  );
};

const Grid = () => (
  <Viewport>
    <Sheet>
      <colgroup>
        <col width={22} />
        {columns.map(([name, width]) => <col key={name} width={width} />)}
      </colgroup>
      <thead>
        <SheetRow $height={14}>
          <Corner />
          {columns.map(([name]) => <ColumnHead key={name} scope="col">{name}</ColumnHead>)}
        </SheetRow>
      </thead>
      <tbody>
        <SheetRow $height={36}>
          <RowHead scope="row" $on>1</RowHead>
          <TitleCell colSpan={15}><Spelled text="~INSERIMENTO ~DATI — ~MARGINE DI ~CONTRIBUZIONE" /></TitleCell>
        </SheetRow>
        <SheetRow $height={23}>
          <RowHead scope="row">2</RowHead>
          <NoteCell colSpan={15}>
            <Spelled text="~Inserire i ~dati ~di ~vendita ~al ~netto IVA — Le ~colonne ~calcolate (I, K, L, M, N) non ~vanno ~modificate" />
          </NoteCell>
        </SheetRow>
        <SheetRow $height={11}>
          <RowHead scope="row">3</RowHead>
          <SpacerCell colSpan={15} />
        </SheetRow>
        <SheetRow $height={33}>
          <RowHead scope="row">4</RowHead>
          {fields.map((field) => <FieldHead key={field}><Spelled text={field} /></FieldHead>)}
        </SheetRow>
        {records.map((record, i) => <RecordRow key={i} record={record} index={i} />)}
        {emptyRows.map((n) => (
          <SheetRow key={n} $height={n % 5 === 0 ? 13 : 14}>
            <RowHead scope="row">{n}</RowHead>
            <EmptyCell colSpan={12} />
            <EmptyCell $alert />
            <EmptyCell colSpan={2} />
          </SheetRow>
        ))}
      </tbody>
    </Sheet>
  </Viewport>
);

export default function Spreadsheet() {
  return (
    <App>
      <GlobalStyle />
      <MenuBar>
        {["File", "Edit", "View", "Insert", "Format", "Styles", "Sheet", "Data", "Tools", "Window", "Help"].map((item) => (
          <MenuItem key={item}>{item}</MenuItem>
        ))}
        <CloseButton aria-label="Close document"><Icon name="close" size={10} /></CloseButton>
      </MenuBar>
      <Toolbar><ToolGroups groups={standardTools} /></Toolbar>
      <Toolbar $inset>
        <ComboBox label="Font name" value="Calibri" width={138} italic />
        <ComboBox label="Font size" value="16 pt" width={66} />
        <ToolGroups groups={formatTools} />
      </Toolbar>
      <Main>
        <Workspace>
          <FormulaBar>
            <ComboBox label="Name box" value="A1:O1" width={107} tight />
            <Separator />
            <ToolButton $narrow aria-label="Function wizard"><Icon name="fx" /></ToolButton>
            <ToolButton $narrow aria-label="Select function"><Icon name="sigma" size={12} /></ToolButton>
            <ArrowButton aria-label="Function list"><Caret size={5} /></ArrowButton>
            <ToolButton $narrow aria-label="Formula"><Icon name="equals" size={14} /></ToolButton>
            <FormulaInput aria-label="Input line" defaultValue="INSERIMENTO DATI — MARGINE DI CONTRIBUZIONE" />
            <ArrowButton aria-label="Expand formula bar"><Caret size={8} /></ArrowButton>
          </FormulaBar>
          <SheetArea>
            <Grid />
            <VerticalScroll><VerticalThumb /></VerticalScroll>
          </SheetArea>
          <HorizontalScroll><HorizontalThumb /><SplitGrip /></HorizontalScroll>
          <TabBar>
            {["M2 3v10M13 3 6 8l7 5M6 8h8", "M8 3 3 8l5 5zM13 3 8 8l5 5z", "M3 3l5 5-5 5zM8 3l5 5-5 5z", "M14 3v10M3 3l7 5-7 5M2 8h8"].map((d, i) => (
              <TabNav key={i} aria-label={["First sheet", "Previous sheet", "Next sheet", "Last sheet"][i]}>
                <svg width="15" height="14" viewBox="0 0 16 16" fill="none" stroke="#c9c9c7"><path d={d} /></svg>
              </TabNav>
            ))}
            <AddTab aria-label="Add sheet">
              <svg width="14" height="15" viewBox="0 0 14 15" fill="none">
                <path d="M.5.5h8l2.500 2.500v11.500H.5z" fill="#fff" stroke="#dddcda" />
                <circle cx="10.500" cy="7.500" r="2.500" fill="#3468b0" /><path d="M9 7.500h3M10.500 6v3" stroke="#fff" />
              </svg>
            </AddTab>
            <Tab>Istruzioni</Tab>
            <TabRule />
            <Tab>Parametri</Tab>
            <TabRule />
            <Tab $on>Inserimento</Tab>
            <Tab>Dashboard</Tab>
            <TabRule />
          </TabBar>
        </Workspace>
        <Sidebar>
          <DeckHandle aria-label="Show sidebar deck">
            <svg width="4" height="6" viewBox="0 0 4 6" aria-hidden="true"><path d="M0 0l4 3-4 3z" fill="#fff" /></svg>
          </DeckHandle>
          <Deck>
            {[["hamburger", "Sidebar settings"], ["properties", "Properties"], ["styles", "Styles"], ["gallery", "Gallery"], ["navigator", "Navigator"], ["functions", "Functions"]].map(([name, label]) => (
              <DeckButton key={name} aria-label={label}><Icon name={name} size={name === "hamburger" ? 14 : 16} /></DeckButton>
            ))}
          </Deck>
        </Sidebar>
      </Main>
      <StatusBar>
        <DocState><Icon name="docstate" size={14} />Sheet 3 of 4</DocState>
        <Status $width={218}>Selected: 1 row, 15 columns</Status>
        <Status $width={205}>PageStyle_Inserimento</Status>
        <Status $grow={10} $center>English (USA)</Status>
        <Status $width={46} />
        <Status $width={30}>
          <svg width="22" height="12" viewBox="0 0 22 12" fill="none" aria-hidden="true">
            <path d="M.5 3.500h12v6H.5z" fill="#fff" stroke={BLUE} />
            <path d="M15 1h5M15 11h5M17.500 1v10" stroke={INK} />
          </svg>
        </Status>
        <Status $width={20} />
        <Status $width={20} />
        <Status $grow={11} $center>Average: ; Sum: 0</Status>
        <ZoomGroup>
          <svg width="7" height="7" viewBox="0 0 7 7" aria-hidden="true"><path d="M0 3.500h7" stroke="#333" strokeWidth="1.500" /></svg>
          <ZoomSlider type="range" aria-label="Zoom" min={0} max={100} defaultValue={50} />
          <svg width="7" height="7" viewBox="0 0 7 7" aria-hidden="true"><path d="M0 3.500h7M3.500 0v7" stroke="#333" strokeWidth="1.500" /></svg>
        </ZoomGroup>
        <Status><button>100%</button></Status>
      </StatusBar>
    </App>
  );
}
